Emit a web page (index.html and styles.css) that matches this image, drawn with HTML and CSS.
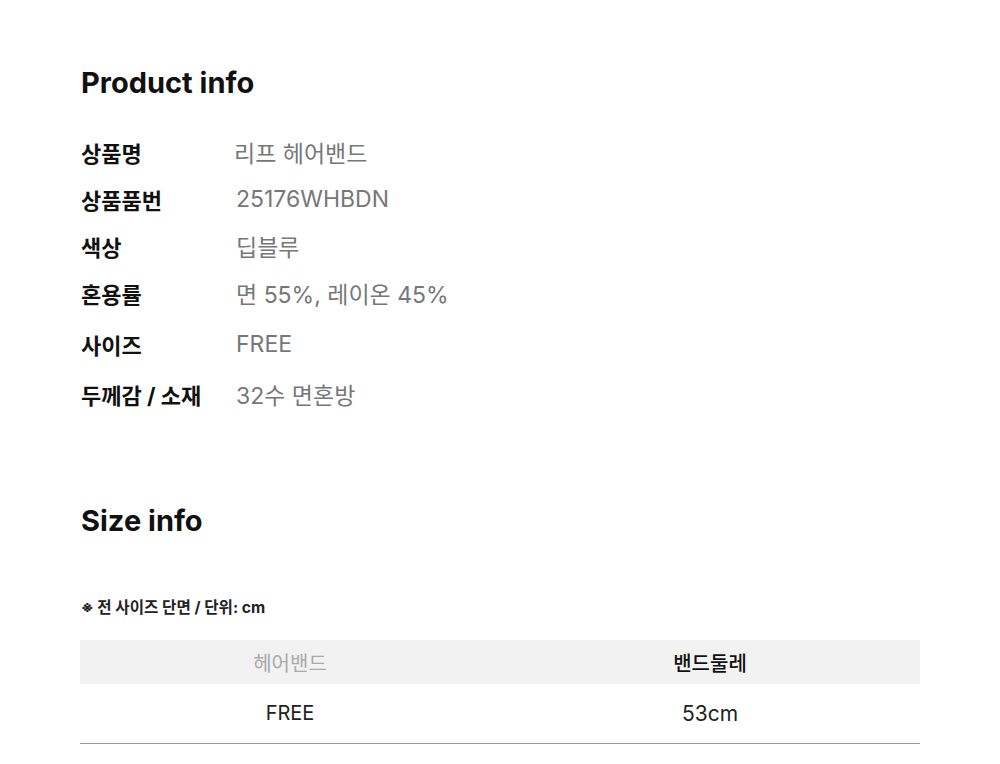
FILE: index.html
```html
<!DOCTYPE html>
<html lang="ko">
<head>
<meta charset="utf-8">
<link rel="stylesheet" href="styles.css">
</head>
<body>
<div class="page">
  <section class="product">
    <h2 class="title">Product info</h2>
    <div class="info">
      <div class="row"><div class="label">상품명</div><div class="value v-first">리프 헤어밴드</div></div>
      <div class="row"><div class="label">상품품번</div><div class="value">25176WHBDN</div></div>
      <div class="row"><div class="label">색상</div><div class="value">딥블루</div></div>
      <div class="row"><div class="label">혼용률</div><div class="value">면 55%, 레이온 45%</div></div>
      <div class="row row-gap4"><div class="label">사이즈</div><div class="value">FREE</div></div>
      <div class="row row-gap3"><div class="label">두께감 / 소재</div><div class="value">32수 면혼방</div></div>
    </div>
  </section>
  <section class="size">
    <h2 class="title">Size info</h2>
    <p class="note">※ 전 사이즈 단면 / 단위: cm</p>
    <table class="size-table">
      <thead>
        <tr><th class="th-muted">헤어밴드</th><th>밴드둘레</th></tr>
      </thead>
      <tbody>
        <tr><td>FREE</td><td class="td-cm">53cm</td></tr>
      </tbody>
    </table>
  </section>
</div>
</body>
</html>
```

FILE: styles.css
```css
* { box-sizing: border-box; }
body {
  margin: 0;
  background: #fff;
  font-family: Inter, "Noto Sans CJK KR", sans-serif;
  color: #111;
}
.page {
  padding: 64px 80px 0 80px;
}
.title {
  margin: 0;
  font-size: 29px;
  font-weight: 700;
  line-height: 38px;
  color: #111;
  padding-left: 1px;
}
.info {
  margin-top: 26px;
  display: flex;
  flex-direction: column;
}
.row {
  display: flex;
  align-items: center;
  height: 47px;
}
.row-gap4 { margin-top: 4px; }
.row-gap3 { margin-top: 3px; }
.label {
  width: 157px;
  padding-left: 1px;
  font-size: 22px;
  font-weight: 700;
  color: #111;
}
.value {
  font-size: 23px;
  color: #777;
  margin-left: -1px;
}
.v-first { margin-left: -3px; }
.size {
  margin-top: 85px;
}
.note {
  margin: 58px 0 0 0;
  font-size: 15.6px;
  font-weight: 700;
  color: #222;
  line-height: 20px;
  padding-left: 1px;
}
.size-table {
  margin-top: 22px;
  width: 840px;
  border-collapse: collapse;
  table-layout: fixed;
}
.size-table th {
  background: #f2f2f2;
  height: 44px;
  font-size: 20px;
  font-weight: 500;
  color: #111;
}
.size-table th.th-muted {
  color: #aaa;
  font-weight: 400;
}
.size-table td {
  height: 59px;
  text-align: center;
  font-size: 20px;
  color: #222;
  border-bottom: 1px solid #999;
}
.size-table td.td-cm { font-size: 21px; }
```
